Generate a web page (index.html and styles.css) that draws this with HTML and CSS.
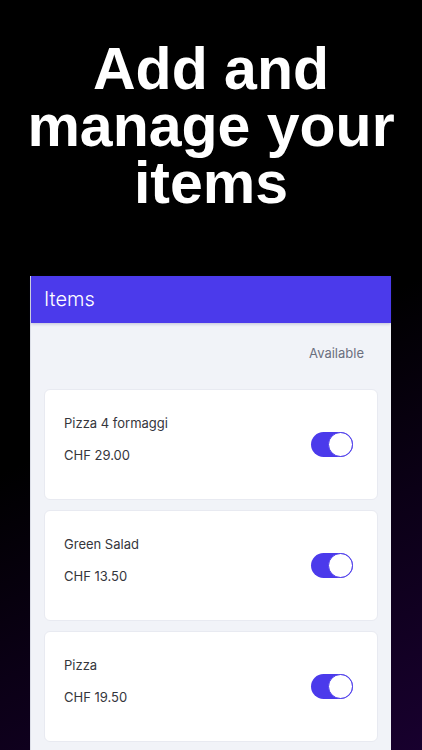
FILE: index.html
```html
<!DOCTYPE html>
<html lang="en">
  <head>
    <meta charset="UTF-8" />
    <meta name="viewport" content="width=device-width, initial-scale=1.0" />
    <title>Items</title>
    <link rel="stylesheet" href="styles.css">
  </head>
  <body>
    <h1 class="headline">Add and<br />manage your<br />items</h1>

    <div class="phone">
      <!-- App bar -->
      <div class="app-bar">Items</div>

      <div class="list-head">Available</div>

      <!-- Item cards -->
      <div class="item-list">
        <div class="item-card">
          <div class="item-info">
            <div class="item-name">Pizza 4 formaggi</div>
            <div class="item-price">CHF 29.00</div>
          </div>
          <span class="toggle on"><span class="knob"></span></span>
        </div>
        <div class="item-card">
          <div class="item-info">
            <div class="item-name">Green Salad</div>
            <div class="item-price">CHF 13.50</div>
          </div>
          <span class="toggle on"><span class="knob"></span></span>
        </div>
        <div class="item-card">
          <div class="item-info">
            <div class="item-name">Pizza</div>
            <div class="item-price">CHF 19.50</div>
          </div>
          <span class="toggle on"><span class="knob"></span></span>
        </div>
      </div>
    </div>
  </body>
</html>
```

FILE: styles.css
```css
html,
body {
  height: 100%;
}

body {
  margin: 0;
  overflow: hidden;
  background: linear-gradient(155deg, #000 50%, #0b0016 72%, #18002e 100%);
  font-family: Inter, "Noto Sans", sans-serif;
}

.headline {
  margin: 0;
  padding-top: 41px;
  color: #fff;
  font-family: "Liberation Sans", Arial, sans-serif;
  font-weight: bold;
  font-size: 59px;
  line-height: 57px;
  text-align: center;
}

.phone {
  margin: 64px 0 0 30px;
  width: 361px;
  height: 480px;
  background: #f1f3f8;
  border-left: 1px solid #dcdfe8;
  box-sizing: border-box;
}

.app-bar {
  height: 47px;
  padding-left: 13px;
  background: #4b3aeb;
  color: #fff;
  font-size: 20px;
  font-weight: 300;
  line-height: 47px;
  box-shadow: 0 1px 3px rgba(40, 30, 120, 0.25);
}

.list-head {
  padding: 22px 27px 0 0;
  margin-bottom: 28px;
  text-align: right;
  color: #6b6f7e;
  font-size: 13px;
  line-height: 16px;
}

.item-list {
  display: flex;
  flex-direction: column;
  gap: 10px;
  padding: 0 13px 0 13px;
}

.item-card {
  display: flex;
  justify-content: space-between;
  height: 111px;
  box-sizing: border-box;
  padding: 25px 24px 0 19px;
  background: #fff;
  border: 1px solid #e8eaf1;
  border-radius: 6px;
}

.item-info {
  display: flex;
  flex-direction: column;
  gap: 16px;
}

.item-name,
.item-price {
  color: #35363c;
  font-size: 13px;
  line-height: 16px;
}

.toggle {
  position: relative;
  align-self: center;
  margin-top: -25px;
  width: 42px;
  height: 25px;
  border-radius: 13px;
  background: #4b3aeb;
}

.toggle .knob {
  position: absolute;
  top: 0;
  right: 0;
  width: 23px;
  height: 23px;
  border-radius: 50%;
  background: #fff;
  border: 1px solid #4b3aeb;
}
```
